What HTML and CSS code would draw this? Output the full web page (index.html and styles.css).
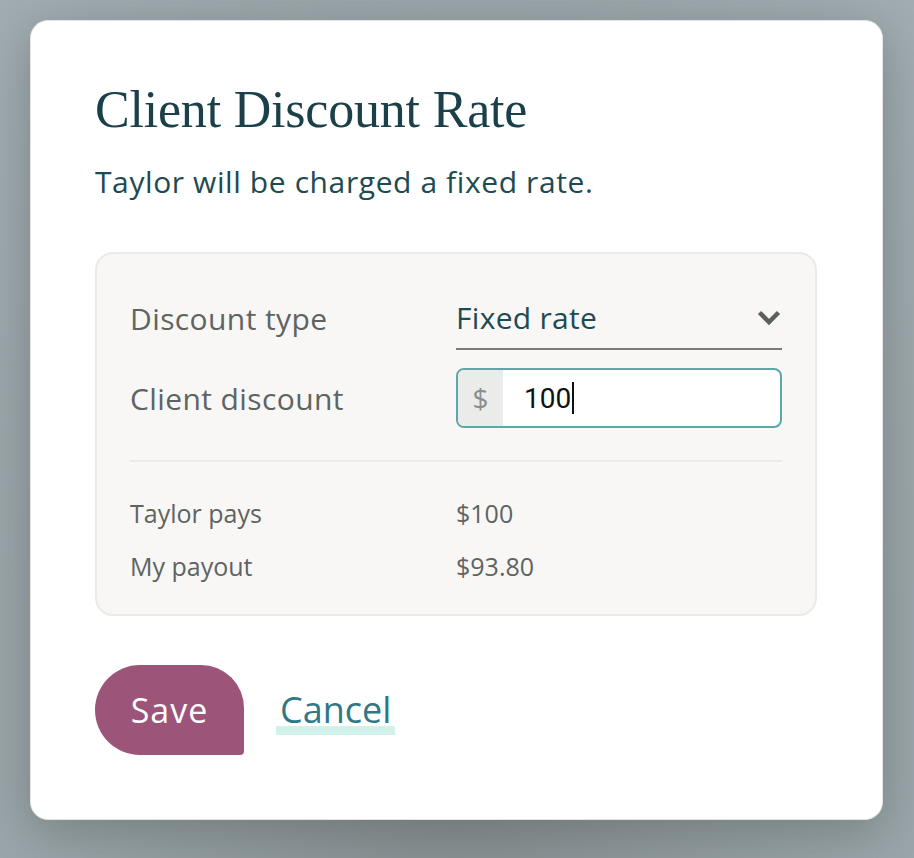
FILE: index.html
```html
<!DOCTYPE html>
<html>
<head>
  <meta charset="utf-8">
  <link rel="stylesheet" href="styles.css">
</head>
<body>
  <div class="modal">
    <h1 class="title">Client Discount Rate</h1>
    <p class="subtitle">Taylor will be charged a fixed rate.</p>

    <div class="panel">
      <div class="field-row">
        <span class="field-label">Discount type</span>
        <div class="select">
          <span class="select-value">Fixed rate</span>
          <svg class="chevron" width="26" height="17" viewBox="0 0 26 17">
            <path d="M3.5 3.5 L13 13 L22.5 3.5" fill="none" stroke="#59605e" stroke-width="4.5"/>
          </svg>
        </div>
      </div>
      <div class="field-row">
        <span class="field-label">Client discount</span>
        <div class="money-input">
          <span class="prefix">$</span>
          <span class="amount">100<span class="caret"></span></span>
        </div>
      </div>

      <div class="divider"></div>

      <div class="summary-row">
        <span class="summary-label">Taylor pays</span>
        <span class="summary-value">$100</span>
      </div>
      <div class="summary-row">
        <span class="summary-label">My payout</span>
        <span class="summary-value">$93.80</span>
      </div>
    </div>

    <div class="actions">
      <button class="btn-save">Save</button>
      <a class="btn-cancel" href="#">Cancel</a>
    </div>
  </div>
</body>
</html>
```

FILE: styles.css
```css
body {
  margin: 0;
  padding: 20px 31px 38px 30px;
  background: radial-gradient(ellipse at 50% 85%, #858d8e 0%, #98a3a7 60%, #a2adb2 100%);
  font-family: "Open Sans", sans-serif;
}

.modal {
  background: white;
  border: 1px solid #e4e4e2;
  border-radius: 18px;
  height: 800px;
  box-sizing: border-box;
  padding: 63px 65px 0 64px;
  box-shadow: 0 12px 50px rgba(60, 70, 70, 0.35);
}

.title {
  margin: 0;
  font-family: "Liberation Serif", serif;
  font-weight: normal;
  font-size: 52px;
  line-height: 52px;
  color: #1b4049;
  letter-spacing: -0.2px;
}

.subtitle {
  margin: 26px 0 0;
  font-size: 30px;
  line-height: 40px;
  color: #1e4a52;
  letter-spacing: 0.6px;
}

.panel {
  margin-top: 50px;
  background: #f8f7f5;
  border: 2px solid #ebeae8;
  border-radius: 18px;
  padding: 32px 33px 31px 33px;
}

.field-row {
  display: grid;
  grid-template-columns: 1fr 1fr;
  align-items: center;
  margin-bottom: 18px;
}

.field-label {
  font-size: 30px;
  color: #5d6462;
  letter-spacing: 0.4px;
}

.select {
  display: flex;
  justify-content: space-between;
  align-items: center;
  height: 64px;
  border-bottom: 2px solid #777b7a;
  box-sizing: border-box;
}

.select-value {
  font-size: 30px;
  color: #1e4a52;
  letter-spacing: 0.3px;
}

.money-input {
  display: flex;
  height: 60px;
  box-sizing: border-box;
  border: 2px solid #5ea6a8;
  border-radius: 8px;
  background: white;
  overflow: hidden;
}

.prefix {
  width: 45px;
  background: #ebebe9;
  color: #8a8e8d;
  font-size: 28px;
  display: flex;
  align-items: center;
  justify-content: center;
}

.amount {
  display: flex;
  align-items: center;
  padding-left: 21px;
  font-family: "Roboto", sans-serif;
  font-size: 28px;
  color: #111;
}

.caret {
  width: 2px;
  height: 32px;
  background: #111;
  margin-left: 1px;
}

.divider {
  height: 2px;
  background: #eaeae8;
  margin: 32px 0 34px;
}

.summary-row {
  display: grid;
  grid-template-columns: 1fr 1fr;
  font-size: 25px;
  line-height: 34px;
  color: #5d6462;
  margin-bottom: 19px;
}

.summary-row:last-child {
  margin-bottom: 0;
}

.actions {
  display: flex;
  align-items: center;
  gap: 32px;
  margin-top: 49px;
}

.btn-save {
  width: 149px;
  height: 90px;
  border: none;
  background: #9c5479;
  color: white;
  font-family: "Open Sans", sans-serif;
  font-size: 34px;
  letter-spacing: 1px;
  border-radius: 46px 44px 4px 46px;
  cursor: pointer;
  padding: 0;
}

.btn-cancel {
  color: #2e7887;
  font-size: 36px;
  text-decoration: none;
  padding: 0 4px;
  background: linear-gradient(#d0f2ea, #d0f2ea) no-repeat 0 41px / 100% 9px;
  line-height: 50px;
}
```
